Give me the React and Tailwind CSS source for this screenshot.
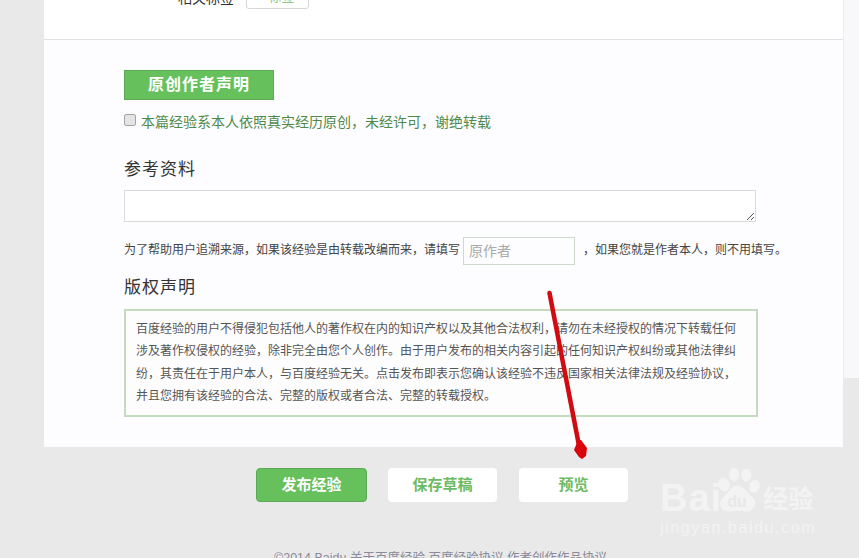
const FONT = 'font-["Liberation_Sans","Noto_Sans_CJK_SC",sans-serif]'

function Arrow() {
  return (
    <svg className="absolute left-[540px] top-[285px]" width="56" height="180" viewBox="0 0 56 180">
      <path d="M9.5 8 L38.5 158" stroke="#d20a12" strokeWidth="4.5" strokeLinecap="round" fill="none" />
      <path d="M34 165 L38 155 L41 155 L47 163 L46 171 L42 174 L39 172 Z" fill="#d8050c" />
    </svg>
  )
}

function Watermark() {
  return (
    <div className="absolute left-[660px] top-[466px] w-[170px] text-[#f3f3f3]">
      <div className="flex items-end h-[50px]">
        <span className="text-[38px] leading-[36px] font-bold tracking-[1px]">Bai</span>
        <svg width="50" height="50" viewBox="0 0 54 50" className="-ml-[10px] shrink-0">
          <g fill="#f3f3f3">
            <ellipse cx="13" cy="18" rx="6" ry="7.5" transform="rotate(-20 13 18)" />
            <ellipse cx="24" cy="7" rx="5.5" ry="7" />
            <ellipse cx="37" cy="8" rx="5.5" ry="7" />
            <ellipse cx="46" cy="20" rx="5.5" ry="7" transform="rotate(20 46 20)" />
            <path d="M27 19 C34 19 37 26 43 31 C50 37 46 48 36 47 C30 46 25 46 20 47 C9 49 5 38 13 31 C18 27 20 19 27 19 Z" />
          </g>
          <text x="27" y="42" textAnchor="middle" fontSize="17" fontWeight="700" fill="#e8e8e8" fontFamily="Liberation Sans">du</text>
        </svg>
        <span className="text-[25px] leading-[34px] font-bold ml-[1px] whitespace-nowrap">经验</span>
      </div>
      <div className="text-[16px] leading-[18px] tracking-[1.6px] mt-[3px] whitespace-nowrap">jingyan.baidu.com</div>
    </div>
  )
}

export default function App() {
  return (
    <div className={`${FONT} relative w-[859px] h-[558px] overflow-hidden bg-[#e9e9e9] text-[#4a4a4a]`}>
      <div className="flex">
        <div className="w-[44px] shrink-0" />
        <div className="w-[799px] h-[447px] shrink-0 bg-[#fdfcfe]">
          <div className="h-[40px] bg-white border-b border-[#e0dfe4] overflow-hidden">
            <div className="flex items-end h-[9px] pl-[134px]">
              <span className="text-[14px] leading-[14px] text-[#333] mb-[4px] w-[68px] whitespace-nowrap">相关标签</span>
              <div className="w-[63px] h-[20px] border border-[#d8d8d8] rounded-[3px] bg-white text-center text-[13px] leading-[14px] text-[#8fc98a]">+标签</div>
            </div>
          </div>
          <div className="pl-[80px]">
            <div className="mt-[30px] w-[150px] h-[30px] bg-[#66c05c] border border-[#5cab54] text-white text-[16px] leading-[28px] font-bold text-center tracking-[1px]">原创作者声明</div>
            <label className="flex items-center mt-[12px] h-[20px]">
              <span className="w-[12px] h-[12px] rounded-[2px] border border-[#a5a5a5] bg-[#e4e4e4] -mt-[4px]" />
              <span className="ml-[5px] text-[14px] text-[#4f8a4b] whitespace-nowrap">本篇经验系本人依照真实经历原创，未经许可，谢绝转载</span>
            </label>
            <h2 className="mt-[26px] text-[17px] leading-[24px] text-[#333] tracking-[1px]">参考资料</h2>
            <div className="relative mt-[8px] w-[632px] h-[32px] bg-white border border-[#d9d9d9]">
              <svg className="absolute right-0 bottom-0" width="9" height="9" viewBox="0 0 9 9">
                <path d="M1 8 L8 1 M5 8 L8 5" stroke="#555" strokeWidth="1" />
              </svg>
            </div>
            <div className="flex items-center mt-[15px] h-[28px] text-[12px] text-[#444] whitespace-nowrap">
              <span className="-mt-[2px]">为了帮助用户追溯来源，如果该经验是由转载改编而来，请填写</span>
              <div className="ml-[3px] w-[112px] h-[28px] border border-[#cfd8cc] bg-[#fdfcfe] pl-[5px] text-[14px] leading-[26px] text-[#aaa]">原作者</div>
              <span className="ml-[8px] -mt-[2px]">，如果您就是作者本人，则不用填写。</span>
            </div>
            <h2 className="mt-[11px] text-[17px] leading-[24px] text-[#333] tracking-[1px]">版权声明</h2>
            <div className="mt-[9px] w-[634px] h-[108px] border-2 border-[#c5dbbf] bg-[#fefdfe] pl-[10px] pt-[7px] text-[12px] leading-[22.3px] text-[#555]">
              <p>百度经验的用户不得侵犯包括他人的著作权在内的知识产权以及其他合法权利，请勿在未经授权的情况下转载任何</p>
              <p>涉及著作权侵权的经验，除非完全由您个人创作。由于用户发布的相关内容引起的任何知识产权纠纷或其他法律纠</p>
              <p>纷，其责任在于用户本人，与百度经验无关。点击发布即表示您确认该经验不违反国家相关法律法规及经验协议，</p>
              <p>并且您拥有该经验的合法、完整的版权或者合法、完整的转载授权。</p>
            </div>
          </div>
        </div>
        <div className="w-[16px] h-[378px] shrink-0 bg-[#f8f7f9] border-l border-[#ececec]" />
      </div>
      <div className="flex mt-[21px] pl-[256px]">
        <button className="w-[111px] h-[34px] rounded-[4px] bg-[#66c05c] border border-[#5cab54] text-white text-[15px] font-bold">发布经验</button>
        <button className="ml-[21px] w-[109px] h-[34px] rounded-[4px] bg-white text-[#6dbb64] text-[15px] font-bold">保存草稿</button>
        <button className="ml-[22px] w-[109px] h-[34px] rounded-[4px] bg-white text-[#6dbb64] text-[15px] font-bold">预览</button>
      </div>
      <div className="mt-[47px] pl-[274px] text-[12.5px] leading-[18px] text-[#8a8a9a] whitespace-nowrap">©2014 Baidu 关于百度经验 百度经验协议 作者创作作品协议</div>
      <Arrow />
      <Watermark />
    </div>
  )
}
